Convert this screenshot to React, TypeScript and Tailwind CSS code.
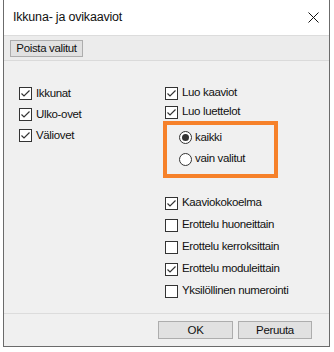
import React from "react";

const font = { fontFamily: '"Liberation Sans", Arial, sans-serif' };

const Check = ({ checked }: { checked: boolean }) => (
  <span className="flex h-[13px] w-[13px] shrink-0 items-center justify-center border border-[#333] bg-white">
    {checked && (
      <svg width="11" height="11" viewBox="0 0 11 11">
        <polyline points="1.5,5.5 4,8 9.5,2.5" fill="none" stroke="#333" strokeWidth="1.2" />
      </svg>
    )}
  </span>
);

const Radio = ({ checked }: { checked: boolean }) => (
  <span className="flex h-[13px] w-[13px] shrink-0 items-center justify-center rounded-full border border-[#333] bg-white">
    {checked && <span className="h-[7px] w-[7px] rounded-full bg-[#333]" />}
  </span>
);

const CheckRow = ({ label, checked, h }: { label: string; checked: boolean; h: string }) => (
  <div className={`flex items-center gap-[4px] ${h}`}>
    <Check checked={checked} />
    <span>{label}</span>
  </div>
);

const lists = [
  { label: "Kaaviokokoelma", checked: true },
  { label: "Erottelu huoneittain", checked: false },
  { label: "Erottelu kerroksittain", checked: false },
  { label: "Erottelu moduleittain", checked: true },
  { label: "Yksilöllinen numerointi", checked: false },
];

export default function App() {
  return (
    <div className="h-[352px] w-[334px] bg-white text-[11.5px] tracking-[-0.35px] text-[#111]" style={font}>
      <div className="ml-[3px] w-[327px] border-x border-b border-[#6b6b6b] bg-[#f0f0f0]">
        {/* title */}
        <div className="flex h-[36px] items-center justify-between border-b border-[#dcdcdc] bg-white pl-[9px] pr-[10px]">
          <span className="text-[12.5px] tracking-[-0.2px]">Ikkuna- ja ovikaaviot</span>
          <svg width="11" height="11" viewBox="0 0 11 11">
            <path d="M0.5 0.5 L10.5 10.5 M10.5 0.5 L0.5 10.5" stroke="#111" strokeWidth="1" />
          </svg>
        </div>

        {/* toolbar */}
        <div className="h-[25px] border-b border-[#dadada] bg-[#ececec] pl-[6px] pt-[4px]">
          <button className="flex h-[17px] w-[73px] items-center justify-center border border-[#adadad] bg-[#e1e1e1]">
            Poista valitut
          </button>
        </div>

        {/* body */}
        <div className="flex h-[253px] border-b border-[#dcdcdc] pl-[15px] pt-[22px]">
          <div className="w-[146px]">
            <CheckRow label="Ikkunat" checked h="h-[21px]" />
            <CheckRow label="Ulko-ovet" checked h="h-[21px]" />
            <CheckRow label="Väliovet" checked h="h-[21px]" />
          </div>
          <div className="flex flex-col">
            <CheckRow label="Luo kaaviot" checked h="h-[20px]" />
            <CheckRow label="Luo luettelot" checked h="h-[18px]" />
            <div className="-ml-[2px] w-[115px] border-[4px] border-[#f6812a] pb-[4px] pl-[12px] pt-[2px]">
              <div className="flex h-[21px] items-center gap-[3px]">
                <Radio checked />
                <span>kaikki</span>
              </div>
              <div className="flex h-[22px] items-center gap-[3px]">
                <Radio checked={false} />
                <span>vain valitut</span>
              </div>
            </div>
            <div className="mt-[14px]">
              {lists.map((l) => (
                <CheckRow key={l.label} label={l.label} checked={l.checked} h="h-[22px]" />
              ))}
            </div>
          </div>
        </div>

        {/* footer */}
        <div className="flex h-[32px] justify-end gap-[5px] pr-[17px] pt-[7px]">
          <button className="h-[18px] w-[75px] border border-[#adadad] bg-[#e1e1e1]">OK</button>
          <button className="h-[18px] w-[74px] border border-[#adadad] bg-[#e1e1e1]">Peruuta</button>
        </div>
      </div>
    </div>
  );
}
